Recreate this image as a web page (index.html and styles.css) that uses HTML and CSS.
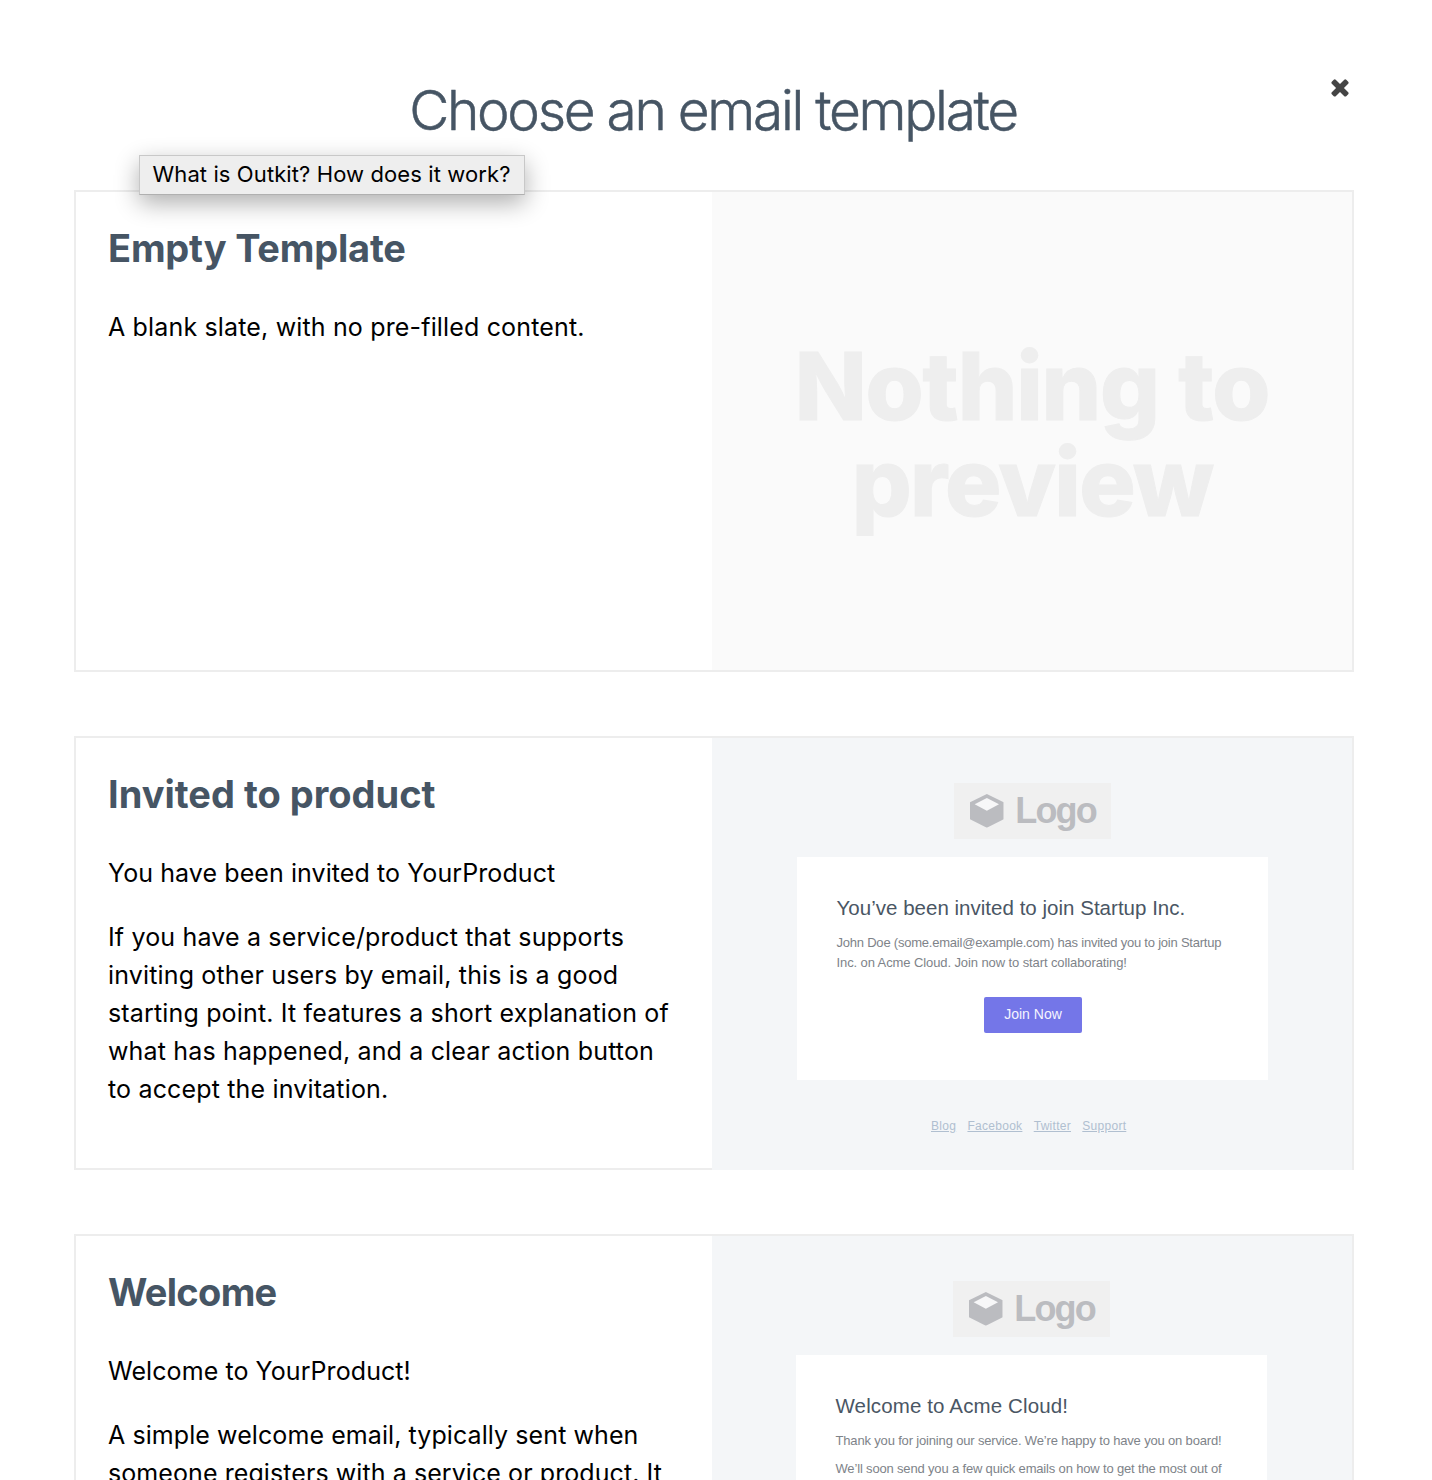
FILE: index.html
```html
<!DOCTYPE html>
<html lang="en">
<head>
<meta charset="utf-8">
<title>Choose an email template</title>
<link rel="stylesheet" href="styles.css">
</head>
<body>
<svg width="0" height="0" class="sprite" aria-hidden="true">
  <symbol id="cube" viewBox="0 0 101 101">
    <path fill="#bbbcc0" d="M50.500 0 101 25V76L50.500 101 0 76V25Z"/>
    <path fill="#f7f7f8" d="M50.500 12 87 31 50.500 50 14 31Z"/>
  </symbol>
</svg>

<main class="page">
  <header class="header">
    <h1 class="title">Choose an email template</h1>
    <button class="close" aria-label="Close">
      <svg viewBox="0 0 1792 1792" width="26" height="26"><path fill="#444" d="M1490 1322q0 40-28 68l-136 136q-28 28-68 28t-68-28l-294-294-294 294q-28 28-68 28t-68-28l-136-136q-28-28-28-68t28-68l294-294-294-294q-28-28-28-68t28-68l136-136q28-28 68-28t68 28l294 294 294-294q28-28 68-28t68 28l136 136q28 28 28 68t-28 68l-294 294 294 294q28 28 28 68z"/></svg>
    </button>
  </header>
  <div class="tooltip" role="tooltip">What is Outkit? How does it work?</div>

  <section class="card card-empty">
    <div class="info">
      <h2 class="name">Empty Template</h2>
      <p class="text">A blank slate, with no pre-filled content.</p>
    </div>
    <div class="preview preview-none">
      <div class="none-line">Nothing to</div>
      <div class="none-line none-second">preview</div>
    </div>
  </section>

  <section class="card card-invite">
    <div class="info">
      <h2 class="name">Invited to product</h2>
      <p class="text lead">You have been invited to YourProduct</p>
      <p class="text">If you have a service/product that supports inviting other users by email, this is a good starting point. It features a short explanation of what has happened, and a clear action button to accept the invitation.</p>
    </div>
    <div class="preview preview-mail">
      <div class="mail">
        <div class="logo"><svg class="cube"><use href="#cube"/></svg><span>Logo</span></div>
        <div class="mail-body">
          <h3 class="mail-title">You’ve been invited to join Startup Inc.</h3>
          <p class="mail-text mail-tight">John Doe (some.email@example.com) has invited you to join Startup <span class="mail-loose">Inc. on Acme Cloud. Join now to start collaborating!</span></p>
          <a class="mail-button">Join Now</a>
        </div>
        <nav class="mail-links"><a>Blog</a><a>Facebook</a><a>Twitter</a><a>Support</a></nav>
      </div>
    </div>
  </section>

  <section class="card card-welcome">
    <div class="info">
      <h2 class="name">Welcome</h2>
      <p class="text">Welcome to YourProduct!</p>
      <p class="text">A simple welcome email, typically sent when someone registers with a service or product. It</p>
    </div>
    <div class="preview preview-mail">
      <div class="mail">
        <div class="logo"><svg class="cube"><use href="#cube"/></svg><span>Logo</span></div>
        <div class="mail-body">
          <h3 class="mail-title">Welcome to Acme Cloud!</h3>
          <p class="mail-text">Thank you for joining our service. We’re happy to have you on board!</p>
          <p class="mail-text">We’ll soon send you a few quick emails on how to get the most out of</p>
        </div>
      </div>
    </div>
  </section>
</main>
</body>
</html>
```

FILE: styles.css
```css
* { box-sizing: border-box; }
body {
  margin: 0;
  height: 1480px;
  overflow: hidden;
  background: #fff;
  color: #000;
  font-family: Inter, "Liberation Sans", sans-serif;
}
h1, h2, h3, p { margin: 0; }
.sprite { position: absolute; }

.page {
  position: relative;
  width: 1280px;
  height: 1480px;
  overflow: hidden;
  margin-left: 74px;
  padding-top: 78px;
  display: flex;
  flex-direction: column;
}

.header { display: grid; flex: none; height: 64px; margin-bottom: 48px; }
.title {
  grid-area: 1 / 1;
  padding-right: 2px;
  text-align: center;
  font-size: 55px;
  line-height: 64px;
  font-weight: 300;
  letter-spacing: -2.28px;
  -webkit-text-stroke: .5px #465564;
  color: #465564;
}
.close {
  grid-area: 1 / 1;
  justify-self: end;
  align-self: start;
  margin: -4px 1px 0 0;
  padding: 0;
  border: 0;
  background: none;
}
.close svg { display: block; }

.tooltip {
  position: absolute;
  left: 65px;
  top: 155px;
  width: 386px;
  height: 40px;
  padding-left: 12.500px;
  border: 1px solid #c8c8c8;
  border-bottom-color: #b0b0b0;
  background: #eee;
  box-shadow: 0 8px 24px rgba(0, 0, 0, .32);
  font-size: 22px;
  line-height: 36px;
  letter-spacing: .1px;
  white-space: nowrap;
  z-index: 1;
}

.card {
  display: grid;
  flex: none;
  grid-template-columns: 636px 640px;
  margin-bottom: 64px;
  border: 2px solid #ededed;
}
.card-empty { height: 482px; }
.card-invite { height: 434px; }
.card-welcome { height: 434px; margin-bottom: 0; }

.info { padding: 33px 30px 0 32px; }
.name {
  margin-bottom: 37px;
  font-size: 38px;
  line-height: 46px;
  font-weight: 700;
  letter-spacing: -.2px;
  color: #465564;
}
.text {
  margin-bottom: 26px;
  font-size: 25px;
  line-height: 38px;
  letter-spacing: .16px;
}
.lead { letter-spacing: .085px; }
.card-invite .name { letter-spacing: 0; }
.card-welcome .name { letter-spacing: -.7px; }
.card-welcome .text { letter-spacing: .08px; }

.preview-none {
  padding-top: 146px;
  background: #fafafa;
  color: #eee;
  text-align: center;
  font-size: 94px;
  line-height: 96px;
  font-weight: 800;
  letter-spacing: -1.2px;
  -webkit-text-stroke: 1px #eee;
}
.none-second { letter-spacing: -1.7px; }

.preview-mail {
  margin-bottom: -2px;
  padding: 45px 0 0 85px;
  background: #f4f6f8;
  font-family: "Liberation Sans", sans-serif;
}
.card-welcome .preview-mail { padding-left: 84px; }
.mail { display: flex; flex-direction: column; width: 471px; }
.logo {
  display: flex;
  gap: 11.500px;
  width: 157px;
  height: 56px;
  margin: 0 0 18px 157px;
  padding: 11px 0 0 16px;
  background: #f0f0f0;
  color: #bbbcc0;
  font-size: 36px;
  line-height: 34px;
  font-weight: 700;
  letter-spacing: -1.8px;
}
.cube { width: 33.7px; height: 33.7px; }
.mail-body { height: 223px; padding: 36px 30px 0 39.5px; background: #fff; }
.mail-title {
  margin-bottom: 10px;
  font-size: 20.5px;
  line-height: 30px;
  font-weight: 400;
  letter-spacing: .02px;
  color: #4a5664;
}
.card-welcome .mail-title { letter-spacing: .13px; }
.mail-text {
  margin-bottom: 8px;
  font-size: 13px;
  line-height: 20px;
  letter-spacing: -.165px;
  color: #7e8389;
}
.mail-tight { margin-bottom: 24px; letter-spacing: -.22px; }
.mail-loose { letter-spacing: -.1px; }
.mail-button {
  display: block;
  width: 98px;
  height: 36px;
  margin-left: 147.5px;
  border-radius: 2px;
  background: #7476e8;
  color: #f4f4ff;
  text-align: center;
  font-size: 14px;
  line-height: 34px;
}
.mail-links {
  display: flex;
  gap: 11.300px;
  margin: 38px 0 0 134px;
  font-size: 12px;
  line-height: 16px;
  letter-spacing: .28px;
  color: #b0bfd0;
  text-decoration: underline;
}
```
